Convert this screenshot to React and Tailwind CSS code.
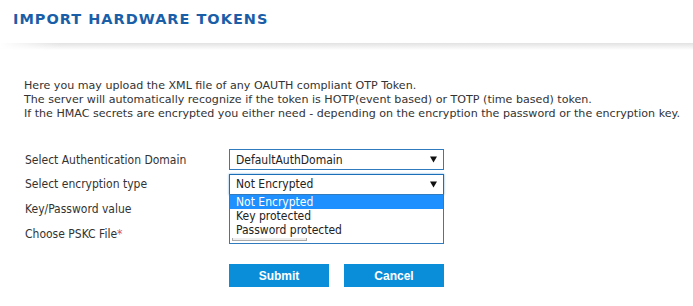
const Caret = () => (
  <svg width="7" height="7" viewBox="0 0 7 7" className="shrink-0">
    <path d="M0 0.5 H7 L3.5 6.5 Z" fill="#111" />
  </svg>
)

const rowLabel = 'w-[204px] shrink-0 text-[12px] text-[#333]'

export default function App() {
  return (
    <div
      className="w-[693px] h-[306px] bg-white overflow-hidden"
      style={{ fontFamily: '"DejaVu Sans", Verdana, sans-serif' }}
    >
      <div className="h-[43px] pl-[13px] pt-[9px]">
        <h1 className="text-[14.5px] font-bold tracking-[1px] text-[#1b5ea8]">
          IMPORT HARDWARE TOKENS
        </h1>
      </div>
      <div className="h-[7px] bg-gradient-to-b from-[#e2e2e2] to-white">
        <div className="w-[60px] h-full bg-gradient-to-r from-white to-transparent" />
      </div>

      <div className="pl-[24px] pt-[29px] text-[11.1px] leading-[14px] text-[#333]">
        <p>Here you may upload the XML file of any OAUTH compliant OTP Token.</p>
        <p>The server will automatically recognize if the token is HOTP(event based) or TOTP (time based) token.</p>
        <p>If the HMAC secrets are encrypted you either need - depending on the encryption the password or the encryption key.</p>
      </div>

      <div
        className="pl-[25px] pt-[26px] flex flex-col"
        style={{ fontFamily: '"DejaVu Sans Condensed", Tahoma, sans-serif' }}
      >
        <div className="flex items-center h-[25px]">
          <span className={rowLabel}>Select Authentication Domain</span>
          <div className="w-[215px] h-[21px] border border-[#2f7bbd] flex items-center justify-between pl-[6px] pr-[6px] text-[12px] text-[#222]">
            <span>DefaultAuthDomain</span>
            <Caret />
          </div>
        </div>

        <div className="flex items-center h-[24px]">
          <span className={rowLabel}>Select encryption type</span>
          <div className="relative">
            <div className="w-[215px] h-[21px] border border-[#1a6fb8] shadow-[0_0_2px_#6aa8e0] flex items-center justify-between pl-[6px] pr-[6px] text-[12px] text-[#222]">
              <span>Not Encrypted</span>
              <Caret />
            </div>
            <div className="absolute left-0 top-[20px] z-10 w-[215px] h-[50px] bg-white border border-[#2f7bbd] text-[12px] leading-[14px] text-[#222]">
              <div className="bg-[#1e90ff] text-white pl-[6px]">Not Encrypted</div>
              <div className="pl-[6px]">Key protected</div>
              <div className="pl-[6px]">Password protected</div>
              <div className="ml-[2px] mt-[1px] w-[75px] h-[3px] border-x border-b border-[#aaa] bg-[#eee]" />
            </div>
          </div>
        </div>

        <div className="flex items-center h-[25px]">
          <span className={rowLabel}>Key/Password value</span>
          <div className="w-[215px] h-[21px] border border-[#2f7bbd]" />
        </div>

        <div className="flex items-center h-[25px]">
          <span className={rowLabel}>
            Choose PSKC File<span className="text-[#d9534f]">*</span>
          </span>
          <div className="w-[215px] h-[21px] pl-[3px] pt-[2px]">
            <div className="w-[75px] h-[16px] border border-[#aaa] bg-[#eee]" />
          </div>
        </div>

        <div
          className="flex gap-[15px] pl-[204px] pt-[18px]"
          style={{ fontFamily: '"Liberation Sans", Arial, sans-serif' }}
        >
          <button className="w-[100px] h-[23px] bg-[#0b8ed9] text-white text-[12px] font-bold">
            Submit
          </button>
          <button className="w-[100px] h-[23px] bg-[#0b8ed9] text-white text-[12px] font-bold">
            Cancel
          </button>
        </div>
      </div>
    </div>
  )
}
